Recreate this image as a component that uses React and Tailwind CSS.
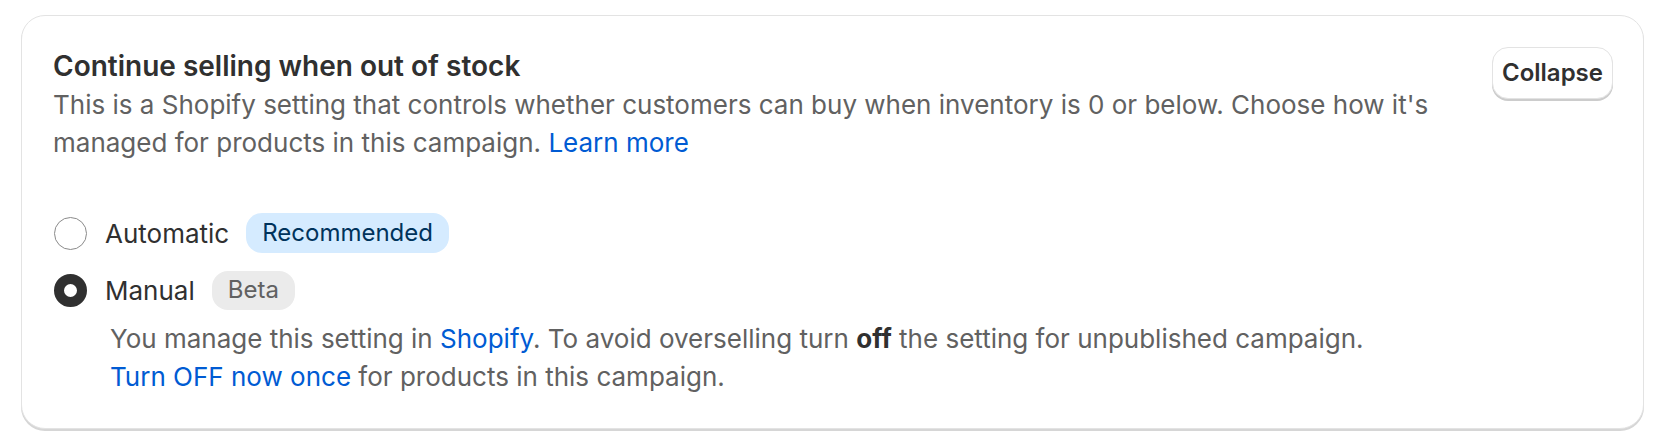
export default function App() {
  return (
    <div className="min-h-screen bg-white pt-[15px] pl-[21px] pr-[10px]" style={{ fontFamily: 'Inter, "Noto Sans", sans-serif' }}>
      <div className="rounded-[24px] border border-[#e3e3e3] bg-white shadow-[0_2px_0_0_#d6d6d6] pl-[31px] pr-[30px] pt-[30px] pb-[32px]">
        <div className="flex items-start gap-[20px]">
          <div className="flex-1">
            <h2 className="text-[28px] leading-[40px] font-semibold text-[#303030]">Continue selling when out of stock</h2>
            <p className="text-[26px] leading-[38px] text-[#616161]">
              This is a Shopify setting that controls whether customers can buy when inventory is 0 or below. Choose how it's managed for products in this campaign.{' '}
              <a className="text-[#005bd3]">Learn more</a>
            </p>
          </div>
          <button className="mt-[1px] h-[52px] px-[9px] rounded-[16px] border border-[#e3e3e3] shadow-[0_2px_0_0_#cccccc] text-[24px] font-semibold text-[#303030] bg-white">
            Collapse
          </button>
        </div>

        <div className="mt-[51px] flex flex-col gap-[17px]">
          <div className="flex items-center h-[40px]">
            <span className="ml-[1px] w-[33px] h-[33px] rounded-full border-[1.5px] border-[#8a8a8a] bg-white"></span>
            <span className="ml-[18px] text-[26px] text-[#303030]">Automatic</span>
            <span className="ml-[17px] h-[40px] flex items-center px-[16px] rounded-[16px] bg-[#d5ebff] text-[24px] text-[#00335c]">Recommended</span>
          </div>
          <div>
            <div className="flex items-center h-[40px]">
              <span className="ml-[1px] w-[33px] h-[33px] rounded-full border-[10px] border-[#303030] bg-white"></span>
              <span className="ml-[18px] text-[26px] text-[#303030]">Manual</span>
              <span className="ml-[17px] h-[39px] flex items-center px-[16px] rounded-[16px] bg-[#ebebeb] text-[24px] text-[#616161]">Beta</span>
            </div>
            <p className="ml-[57px] mt-[10px] text-[26px] leading-[38px] text-[#616161]">
              You manage this setting in <a className="text-[#005bd3]">Shopify</a>. To avoid overselling turn <b className="font-bold text-[#303030]">off</b> the setting for unpublished campaign.
              <br />
              <a className="text-[#005bd3]">Turn OFF now once</a> for products in this campaign.
            </p>
          </div>
        </div>
      </div>
    </div>
  )
}
